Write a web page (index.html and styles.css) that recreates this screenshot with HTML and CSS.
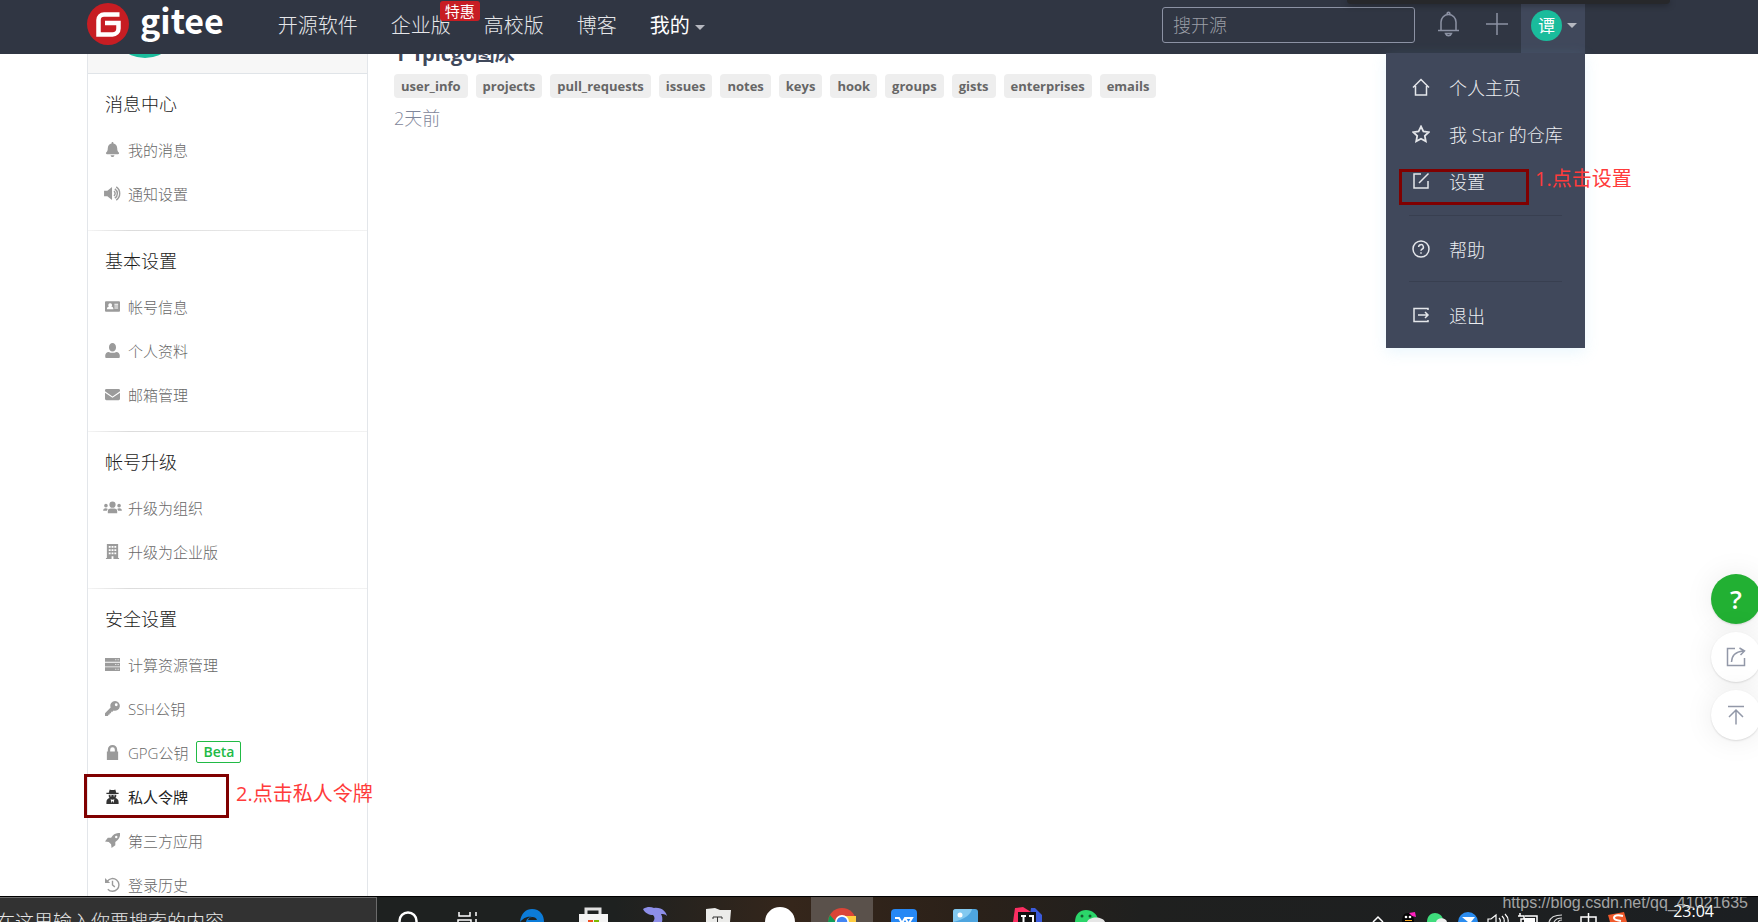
FILE: index.html
```html
<!DOCTYPE html>
<html lang="zh-CN">
<head>
<meta charset="utf-8">
<title>私人令牌 - Gitee</title>
<link rel="stylesheet" href="styles.css">
</head>
<body>
<div class="screen">
  <header class="topbar">
    <a class="logo" href="#">
      <svg class="logo-mark" viewBox="0 0 42 42"><circle cx="21" cy="21" r="21" fill="#c71d23"/><path d="M32.500 11.500H17a5.500 5.500 0 0 0-5.500 5.500v14.500h14a6 6 0 0 0 6-6v-5.500H18" fill="none" stroke="#fff" stroke-width="4.500"/></svg>
      <span>gitee</span>
    </a>
    <nav class="nav">
      <a href="#">开源软件</a>
      <a href="#" class="has-badge">企业版<span class="badge">特惠</span></a>
      <a href="#">高校版</a>
      <a href="#">博客</a>
      <a href="#" class="mine">我的<i class="caret"></i></a>
    </nav>
    <input class="search" type="text" placeholder="搜开源" aria-label="搜开源">
    <button class="icon-btn bell" aria-label="通知"><svg width="22" height="26" viewBox="0 0 22 26" fill="none" stroke="#8c92a4" stroke-width="1.500"><path d="M0 19.500h21M3 19V11a7.500 7.500 0 0 1 15 0v8M7.500 22.500c1 3 5 3 6 0zM9 3.500c0-3 3-3 3 0"/></svg></button>
    <button class="icon-btn plus" aria-label="新建"><svg width="22" height="22" viewBox="0 0 22 22" stroke="#8c92a4" stroke-width="1.500"><path d="M0 11h22M11 0v22"/></svg></button>
    <div class="user">
      <button class="user-btn"><span class="user-face">谭</span><i class="caret"></i></button>
      <div class="menu">
        <a href="#"><svg viewBox="0 0 18 18"><path d="M1 9.500 9 1.500l8 8M3.500 8v9h11V8"/></svg>个人主页</a>
        <a href="#"><svg viewBox="0 0 18 18"><path d="m9 1.500 2.400 5 5.300.700-3.900 3.700 1 5.400L9 13.700l-4.800 2.600 1-5.400L1.300 7.200l5.300-.700z" stroke-width="1.800"/></svg>我 Star 的仓库</a>
        <a href="#"><svg viewBox="0 0 18 18"><path d="M9 2H2v14h14V9M16.500 1.500 7 11"/></svg>设置</a>
        <hr>
        <a href="#"><svg viewBox="0 0 18 18"><circle cx="9" cy="9" r="8"/><path d="M6.600 7a2.400 2.400 0 1 1 3.400 2.200c-.7.400-1 .8-1 1.600M9 12.200v1.600"/></svg>帮助</a>
        <hr>
        <a href="#"><svg viewBox="0 0 18 18"><path d="M16 4V2.500H2v13h14V14M6 9h10M13 6l3 3-3 3"/></svg>退出</a>
        <div class="mark mark-settings"></div>
        <div class="note note-settings">1.点击设置</div>
      </div>
    </div>
    <div class="overlay-strip"></div>
  </header>

  <main class="page">
    <aside class="sidebar">
      <div class="profile"><div class="avatar"></div></div>
      <section>
        <h2>消息中心</h2>
        <ul>
          <li><a href="#"><svg viewBox="-32 0 512 512"><path d="M224 512c35.320 0 63.970-28.650 63.970-64H160.030c0 35.350 28.650 64 63.970 64zm215.390-149.710c-19.320-20.760-55.470-51.990-55.470-154.290 0-77.700-54.480-139.900-127.940-155.160V32c0-17.670-14.320-32-31.980-32s-31.980 14.330-31.980 32v20.840C118.560 68.100 64.080 130.300 64.080 208c0 102.300-36.150 133.530-55.470 154.290-6 6.450-8.660 14.160-8.610 21.710.11 16.400 12.980 32 32.100 32h383.800c19.120 0 32-15.600 32.100-32 .05-7.550-2.610-15.270-8.610-21.710z"/></svg>我的消息</a></li>
          <li><a href="#"><svg class="wide" viewBox="0 0 18 16"><path d="M0 5h3.500L8.500 1v14l-5-4H0z"/><path class="line" d="M10.500 5.500a3 3 0 0 1 0 5M11.500 3a6 6 0 0 1 0 10M13 1a8.500 8.500 0 0 1 0 14"/></svg>通知设置</a></li>
        </ul>
      </section>
      <section>
        <h2>基本设置</h2>
        <ul>
          <li><a href="#"><svg viewBox="0 0 16 16"><path fill-rule="evenodd" d="M1 2.500h14a1 1 0 0 1 1 1v9a1 1 0 0 1-1 1H1a1 1 0 0 1-1-1v-9a1 1 0 0 1 1-1zM5.500 4.500a2 2 0 0 0-1.200 3.600C3 8.500 2 9.200 2 11h7c0-1.800-1-2.500-2.300-2.900A2 2 0 0 0 5.500 4.500zM10 5v1h4V5zm0 2v1h4V7zm0 2v1h4V9z"/></svg>帐号信息</a></li>
          <li><a href="#"><svg viewBox="-32 0 512 512"><path d="M224 288c80 0 120-64 120-144S290 0 224 0 104 64 104 144s40 144 120 144zm130 16c-80 44-180 44-260 0C30 310-24 360-24 420v60q0 32 32 32h432q32 0 32-32v-60c0-60-54-110-118-116z"/></svg>个人资料</a></li>
          <li><a href="#"><svg viewBox="0 0 16 16"><path d="M0 3.500a1.500 1.500 0 0 1 1.500-1.500h13A1.500 1.500 0 0 1 16 3.500v1L8 10 0 4.500zM0 6l8 5.500L16 6v6.500a1.500 1.500 0 0 1-1.500 1.500h-13A1.500 1.500 0 0 1 0 12.500z"/></svg>邮箱管理</a></li>
        </ul>
      </section>
      <section>
        <h2>帐号升级</h2>
        <ul>
          <li><a href="#"><svg class="wide" viewBox="0 0 20 16"><circle cx="10" cy="5" r="3.300"/><circle cx="3" cy="6" r="1.900"/><circle cx="17" cy="6" r="1.900"/><path d="M5 14v-2q0-3 3-3h4q3 0 3 3v2zM0 11.500q0-2.800 2.500-2.800 2 0 2.500.800Q4 10.500 4 11.500zM20 11.500q0-2.800-2.500-2.800-2 0-2.500.800 1 1 1 2z"/></svg>升级为组织</a></li>
          <li><a href="#"><svg viewBox="0 0 16 16"><path fill-rule="evenodd" d="M2 0h12v15h1v1H9v-3H7v3H1v-1h1zM4 2v2h2V2zm3 0v2h2V2zm3 0v2h2V2zM4 5.500v2h2v-2zm3 0v2h2v-2zm3 0v2h2v-2zM4 9v2h2V9zm3 0v2h2V9zm3 0v2h2V9z"/></svg>升级为企业版</a></li>
        </ul>
      </section>
      <section>
        <h2>安全设置</h2>
        <ul>
          <li><a href="#"><svg viewBox="0 0 16 16"><path fill-rule="evenodd" d="M0 1h16v4H0zm11 1.500v1h1v-1zm2.500 0v1h1v-1zM0 6h16v4H0zm11 1.500v1h1v-1zm2.500 0v1h1v-1zM0 11h16v4H0zm11 1.500v1h1v-1zm2.500 0v1h1v-1z"/></svg>计算资源管理</a></li>
          <li><a href="#"><svg viewBox="0 0 16 16"><path fill-rule="evenodd" d="M10.800 0A5.200 5.200 0 1 1 9.200 10.200L8 11.500H6.500V13H5v1.500H4L3 16H0v-3l6-6A5.200 5.200 0 0 1 10.800 0zM12 2.500a1.500 1.500 0 1 0 0 3 1.500 1.500 0 0 0 0-3z"/></svg>SSH公钥</a></li>
          <li><a href="#"><svg viewBox="0 0 16 16"><path fill-rule="evenodd" d="M3 7V5a5 5 0 0 1 10 0v2h1v9H2V7zm2.500 0h5V5a2.500 2.500 0 0 0-5 0z"/></svg>GPG公钥<span class="beta">Beta</span></a></li>
          <li class="active"><a href="#"><svg viewBox="0 0 16 16"><path fill-rule="evenodd" d="M5 .5q3 1.200 6 0L12 4h2.500v1.200h-13V4H4zM4 6h8v1.500q0 1.500-1 2.200 3.500.800 3.500 4.300v2h-13v-2q0-3.500 3.500-4.300-1-.7-1-2.200zM5.200 6.800v1h2v-1zm3.600 0v1h2v-1zM6 11l1 4 1-2.500L9 15l1-4-2 .500z"/></svg>私人令牌</a><div class="mark mark-token"></div><div class="note note-token">2.点击私人令牌</div></li>
          <li><a href="#"><svg viewBox="0 0 16 16"><path fill-rule="evenodd" d="M16 0q.8 6-5 9.500V13l-4 3-.5-4L4 9.500 0 9l3-4h3.500Q10-.5 16 0zm-4 3a1.300 1.300 0 1 0 0 2.600A1.300 1.300 0 0 0 12 3z"/></svg>第三方应用</a></li>
          <li><a href="#"><svg viewBox="0 0 16 16"><path d="M0 1l5.500 5.500H0z"/><path class="line" d="M2.500 4.500A6.800 6.800 0 1 1 3 13M8 4v4.500l2.500 2"/></svg>登录历史</a></li>
        </ul>
      </section>
    </aside>

    <div class="content">
      <h3>1 1picgo图床</h3>
      <div class="tags"><span>user_info</span><span>projects</span><span>pull_requests</span><span>issues</span><span>notes</span><span>keys</span><span>hook</span><span>groups</span><span>gists</span><span>enterprises</span><span>emails</span></div>
      <p class="time">2天前</p>
    </div>
  </main>

  <div class="floaters">
    <button class="float help" aria-label="帮助">?</button>
    <button class="float" aria-label="分享"><svg width="20" height="20" viewBox="0 0 20 20"><path d="M9 1.500H1.500v17h17V11M5.500 15Q6 5 17 4M13.500 1l5 3-4 4"/></svg></button>
    <button class="float" aria-label="返回顶部"><svg width="20" height="20" viewBox="0 0 20 20"><path d="M2 1.500h16M10 19.500V5M3 12l7-7 7 7"/></svg></button>
  </div>

  <footer class="taskbar">
    <div class="task-search"><span>在这里输入你要搜索的内容</span></div>
    <div class="apps">
      <svg viewBox="0 0 62 26"><circle cx="31" cy="25" r="8.500" fill="none" stroke="#fff" stroke-width="2.500"/></svg>
      <svg viewBox="0 0 62 26"><path d="M20 16v4h11v-4M19 26v-2h13v2M37 16v4M37 23v3" fill="none" stroke="#fff" stroke-width="1.500"/></svg>
      <svg viewBox="0 0 62 26"><path d="M19 26C20 17 25 13 31 13c8 0 12 6 12 13H25c0-2 2-5 6-5-6-1-9 2-12 5z" fill="#0c7cd9"/><path d="M27 24c1-4 8-4 9 0z" fill="#202221"/></svg>
      <svg viewBox="0 0 62 26"><path d="M23 19v-6h14v6" fill="none" stroke="#e0e0e0" stroke-width="3"/><path d="M16 18h29v8H16z" fill="#f4f4f4"/><path d="M25 24h5v2h-5z" fill="#f25022"/><path d="M31 24h5v2h-5z" fill="#7fba00"/></svg>
      <svg viewBox="0 0 62 26"><path d="M18 13c5-3 8-2 11-1 8-1 12 4 13 8-2-2-4-2-6-2q2 3 1 8h-9q3-4 0-7c-4 0-8-2-10-6z" fill="#8d8ee8"/></svg>
      <svg viewBox="0 0 62 26"><path d="M19 13l9-1 5 2h11l-1 12H19z" fill="#ececea"/><path d="M26 23v-2h9v2M30.500 21v5" stroke="#333" fill="none"/></svg>
      <svg viewBox="0 0 62 26"><path d="M16 26c0-9 7-15 15-15s15 6 15 15z" fill="#fff"/></svg>
      <svg class="current" viewBox="0 0 62 26"><circle cx="31" cy="26" r="14" fill="#db4437"/><path d="M31 20h14v6H31z" fill="#ffcd40"/><path d="M17 26q0-4 2-7l6 7z" fill="#0f9d58"/><circle cx="31" cy="26" r="7" fill="#fff"/><circle cx="31" cy="26" r="5.300" fill="#4285f4"/></svg>
      <svg viewBox="0 0 62 26"><rect x="18" y="13" width="26" height="20" rx="4" fill="#2688f5"/><path d="M22 22h4l3 5 3-5h7l-3 5M32 22l3 5" fill="none" stroke="#fff" stroke-width="2"/></svg>
      <svg viewBox="0 0 62 26"><rect x="18" y="13" width="25" height="20" rx="3" fill="#4ea5df"/><path d="M18 26V16q0-3 3-3h16q-2 9-19 13z" fill="#83c9f0"/><circle cx="25" cy="19" r="2.500" fill="#fff"/></svg>
      <svg viewBox="0 0 62 26"><path d="M16 26l2-14 8-1 8 5v10z" fill="#fc2e62"/><path d="M34 12l4 0 7 7v7H32z" fill="#3b5bdb"/><path d="M21 16h18v10H21z" fill="#111"/><path d="M24 20h5M26.500 20v6M32 20h4v6" fill="none" stroke="#fff" stroke-width="2"/></svg>
      <svg viewBox="0 0 62 26"><path d="M16 26c0-8 5-12 11-12s11 4 12 9l-7 3z" fill="#2bd66a"/><path d="M28 26c2-6 16-6 18 0z" fill="#e6e6e6"/><circle cx="23" cy="20" r="1.500" fill="#145c30"/><circle cx="31" cy="20" r="1.500" fill="#145c30"/></svg>
    </div>
    <div class="tray">
      <svg viewBox="0 0 30 26"><path d="M10 26l5-5 5 5" fill="none" stroke="#fff" stroke-width="1.500"/></svg>
      <svg viewBox="0 0 30 26"><path d="M9 26c0-6 2-9 6-9s6 3 6 9z" fill="#050505"/><path d="M16 17l6-1 1 5-4-1z" fill="#ff20c0"/><circle cx="13" cy="21" r="1.300" fill="#fff"/><circle cx="17" cy="21" r="1.300" fill="#fff"/><path d="M12 24h7v1h-7z" fill="#f5a623"/></svg>
      <svg viewBox="0 0 30 26"><path d="M4 26c0-6 4-9 8-9s8 3 8 7l-4 2z" fill="#3fdc7c"/><path d="M13 26c1-5 10-5 11 0z" fill="#eee"/></svg>
      <svg viewBox="0 0 30 26"><circle cx="15" cy="26" r="10" fill="#2a8cf0"/><path d="M9 21l13 0-4 5h-3z" fill="#fff"/></svg>
      <svg viewBox="0 0 30 26"><path d="M5 26v-3h3l5-4v7M16 22q2 2 1 4M19 20q3 3 2 6M22 18q4 4 3 8" fill="none" stroke="#fff" stroke-width="1.200"/></svg>
      <svg viewBox="0 0 30 26"><path d="M7 17v3M5 20h6v3H8v3M12 20h12v6" fill="none" stroke="#fff" stroke-width="1.500"/><path d="M11 22h11v4H11z" fill="#fff"/></svg>
      <svg viewBox="0 0 30 26"><path d="M6 26q2-7 13-7M11 26q2-4 8-4M15 26q1-2 4-2" fill="none" stroke="#ddd" stroke-width="1.200"/></svg>
      <svg viewBox="0 0 30 26"><path d="M8 26v-5h15v5M15.500 17v9" fill="none" stroke="#fff" stroke-width="1.500"/></svg>
      <svg viewBox="0 0 30 26"><path d="M5 19l16-3 3 10H7z" fill="#f0592a"/><path d="M20 20q-9-2-9 2 0 2 7 3" fill="none" stroke="#fff" stroke-width="2"/></svg>
    </div>
    <time class="clock">23:04</time>
    <div class="watermark">https://blog.csdn.net/qq_41021635</div>
  </footer>
</div>
</body>
</html>
```
FILE: styles.css
```css
* { box-sizing: border-box; }
body {
  margin: 0;
  font-family: "Open Sans", "Noto Sans CJK SC", sans-serif;
  font-weight: 300;
  color: #1c1c1c;
  background: #fff;
}
a { color: inherit; text-decoration: none; }
button { border: 0; padding: 0; background: none; font: inherit; cursor: pointer; }
h2, h3, p, ul { margin: 0; padding: 0; font-weight: inherit; }
ul { list-style: none; }

.screen {
  position: relative;
  display: flex;
  flex-direction: column;
  height: 100vh;
  overflow: hidden;
}

/* top bar */
.topbar {
  position: relative;
  z-index: 2;
  display: flex;
  flex: none;
  align-items: flex-start;
  height: 54px;
  padding: 0 173px 0 87px;
  background: #303643;
  color: #e6e7ea;
}
.logo { display: flex; gap: 11px; padding-top: 3px; }
.logo-mark { width: 42px; height: 42px; }
.logo span {
  font-family: "Noto Sans CJK SC", sans-serif;
  font-size: 34px;
  font-weight: 700;
  line-height: 34px;
  color: #fff;
}
.nav {
  display: flex;
  gap: 33px;
  margin-left: 54px;
  font-size: 20px;
  line-height: 52px;
}
.nav a { white-space: nowrap; }
.has-badge { position: relative; }
.badge {
  position: absolute;
  top: 1px;
  left: 49px;
  padding: 0 5px;
  border-radius: 3px;
  background: #c71d23;
  color: #fff;
  font-size: 15px;
  font-weight: 400;
  line-height: 20px;
}
.nav .mine { color: #fff; font-weight: 400; }
.caret {
  display: inline-block;
  margin-left: 5px;
  border: 5px solid transparent;
  border-top-color: #b5b8c0;
  border-bottom: 0;
  vertical-align: middle;
}
.search {
  width: 253px;
  height: 36px;
  margin: 7px 0 0 auto;
  padding: 0 10px;
  border: 1px solid #8c92a4;
  border-radius: 3px;
  background: transparent;
  color: #fff;
  font: inherit;
  font-size: 18px;
}
.search::placeholder { color: #9b9ea6; opacity: 1; }
.icon-btn { display: flex; }
.bell { margin: 11px 0 0 23px; }
.plus { margin: 13px 13px 0 26px; }
.user { position: relative; }
.user-btn {
  display: flex;
  align-items: center;
  width: 64px;
  height: 54px;
  padding: 0 0 3px 10px;
  background: #40485b;
}
.user-face {
  width: 31px;
  height: 31px;
  border-radius: 50%;
  background: #1abc9c;
  color: #fff;
  font-size: 17px;
  font-weight: 400;
  line-height: 31px;
  text-align: center;
}
.overlay-strip {
  position: absolute;
  top: 0;
  right: 88px;
  width: 323px;
  height: 4px;
  border-radius: 0 0 4px 4px;
  background: #27282b;
  box-shadow: 0 1px 6px rgba(0, 0, 0, .4);
}

/* user menu */
.menu {
  position: absolute;
  top: 53px;
  right: 0;
  width: 199px;
  padding: 10px 0;
  background: #40485b;
  color: #eceef1;
  font-size: 18px;
  box-shadow: 0 4px 14px rgba(120, 200, 240, .16);
}
.menu a {
  display: flex;
  align-items: center;
  gap: 19px;
  height: 47px;
  padding-left: 26px;
  white-space: nowrap;
}
.menu svg {
  width: 18px;
  height: 18px;
  fill: none;
  stroke: #e4e6ea;
  stroke-width: 1.5px;
}
.menu hr {
  height: 1px;
  margin: 9px 23px;
  border: 0;
  background: #383f50;
}
.menu hr:first-of-type { margin-top: 11px; }
.mark { position: absolute; border: 3px solid #800000; }
.note {
  position: absolute;
  color: #ff3b3b;
  font-size: 20px;
  font-weight: 400;
  line-height: 28px;
  white-space: nowrap;
}
.mark-settings { top: 116px; left: 13px; width: 130px; height: 36px; }
.note-settings { top: 112px; left: 149px; }

/* page */
.page {
  display: flex;
  flex: 1;
  align-items: flex-start;
  gap: 26px;
  min-height: 0;
  padding-left: 87px;
}
.sidebar {
  flex: none;
  width: 281px;
  margin-top: -68px;
  border: solid #e3e6ea;
  border-width: 0 1px;
}
.profile {
  height: 88px;
  padding-left: 21px;
  border-bottom: 1px solid #e0e4e8;
  background: #f7f7f7;
}
.avatar { width: 72px; height: 72px; border-radius: 50%; background: #1abc9c; }
.sidebar section { padding: 7px 17px 15px; }
.sidebar section + section {
  border-top: 1px solid;
  border-image: linear-gradient(90deg, #f5f5f5, #dcdcdc 15%, #f2f2f2) 1;
}
.sidebar h2 { font-size: 18px; line-height: 46px; }
.sidebar li { position: relative; }
.sidebar li a {
  display: flex;
  align-items: center;
  gap: 8px;
  height: 44px;
  color: #686868;
  font-size: 15px;
}
.sidebar svg { width: 15px; height: 15px; fill: #9b9b9b; }
.sidebar svg.wide { width: 19px; margin: 0 -2px; }
.sidebar svg .line { fill: none; stroke: #9b9b9b; stroke-width: 1.5px; }
.sidebar .active a { color: #222; font-weight: 400; }
.sidebar .active svg { fill: #333; }
.beta {
  padding: 0 6px;
  border: 1px solid #21ba45;
  border-radius: 2px;
  color: #21ba45;
  font-size: 14px;
  font-weight: 600;
  line-height: 20px;
}
.mark-token { top: 0; left: -21px; width: 145px; height: 44px; }
.note-token { top: 6px; left: 131px; }

.content { flex: 1; margin-top: -14px; }
.content h3 {
  color: #40485b;
  font-size: 20px;
  font-weight: 700;
  line-height: 28px;
}
.tags { display: flex; gap: 8px; margin-top: 6px; }
.tags span {
  padding: 0 7px;
  border-radius: 4px;
  background: #eee;
  color: #666;
  font-size: 13px;
  font-weight: 700;
  line-height: 24px;
}
.time { margin-top: 6px; color: #7f869a; font-size: 18px; line-height: 28px; }

/* floating tools */
.floaters {
  position: absolute;
  right: -3px;
  bottom: 182px;
  display: grid;
  gap: 8px;
}
.float {
  display: grid;
  place-items: center;
  width: 50px;
  height: 50px;
  border-radius: 50%;
  background: #fff;
  box-shadow: 0 1px 2px rgba(0, 0, 0, .12), 0 0 30px rgba(0, 0, 0, .08);
}
.float svg { fill: none; stroke: #9298a8; stroke-width: 1.5px; }
.float.help { background: #22b033; color: #fff; font-size: 26px; font-weight: 600; line-height: 48px; }

/* taskbar */
.taskbar {
  position: relative;
  z-index: 1;
  display: flex;
  flex: none;
  height: 26px;
  overflow: hidden;
  background: linear-gradient(90deg, #1e2120 35%, #35261b 45%, #2b2119 55%, #1f201f 65%, #1c1f22);
  border-top: 1px solid #000;
  color: #fff;
}
.task-search {
  width: 377px;
  height: 40px;
  border: solid #6b6b6b;
  border-width: 1px 1px 0 0;
  background: #323232;
  color: #e6e6e6;
  font-size: 19px;
  line-height: 48px;
  white-space: nowrap;
}
.task-search span { margin-left: -4px; }
.apps { display: flex; }
.apps svg { width: 62px; height: 26px; margin-top: -1px; }
.apps .current { background: #5a514b; }
.tray { display: flex; margin-left: auto; }
.tray svg { width: 30px; height: 26px; margin-top: -1px; }
.clock { margin: 0 44px 0 40px; font-size: 16px; font-weight: 400; line-height: 28px; }
.watermark {
  position: absolute;
  top: -4px;
  right: 10px;
  color: rgba(200, 200, 200, .8);
  font-family: "Liberation Sans", sans-serif;
  font-size: 16px;
  font-weight: 400;
  line-height: 20px;
}
```
